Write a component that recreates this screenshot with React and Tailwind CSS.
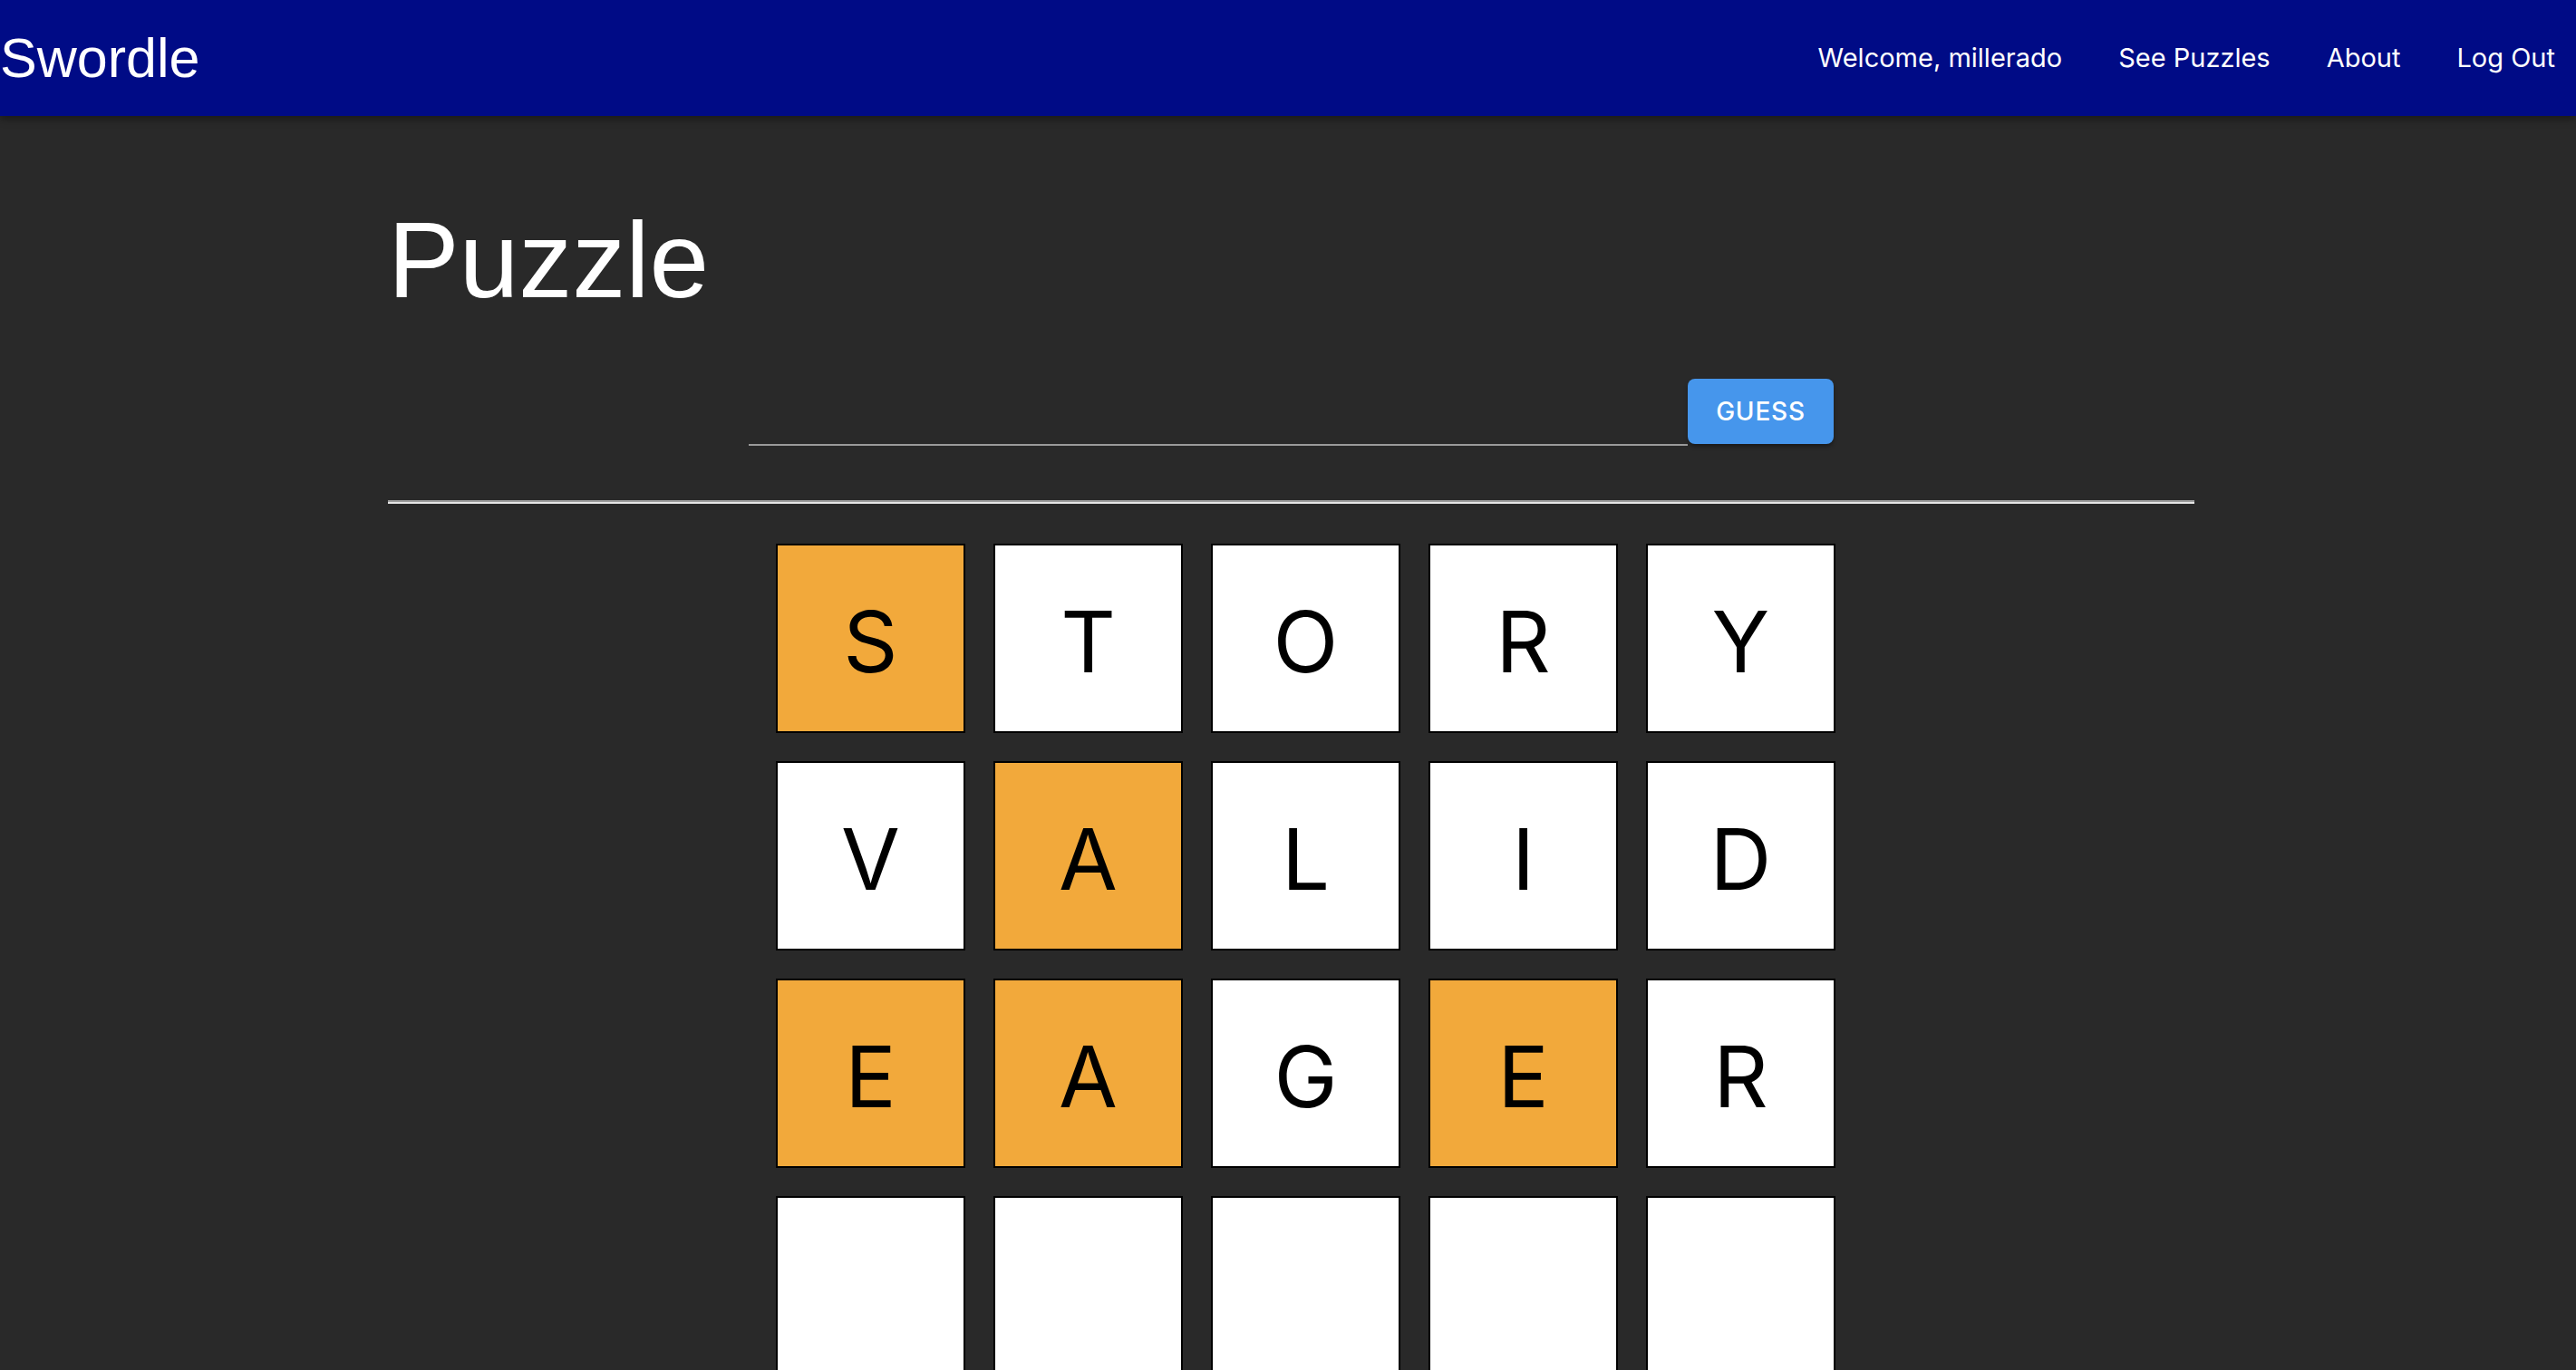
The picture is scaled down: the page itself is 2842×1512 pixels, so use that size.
import { useState } from "react";

const GUESSES = ["STORY", "VALID", "EAGER"];
// letters that are in the word but in the wrong spot
const PRESENT = [
  [true, false, false, false, false],
  [false, true, false, false, false],
  [true, true, false, true, false],
];

function Tile({ letter, present }) {
  return (
    <div
      className={`w-[209px] h-[209px] pt-[7px] border-2 border-black flex items-center justify-center text-[94px] text-black font-['Inter',sans-serif] leading-none ${
        present ? "bg-[#f2a93b]" : "bg-white"
      }`}
    >
      {letter}
    </div>
  );
}

export default function App() {
  const [guess, setGuess] = useState("");
  const rows = [...GUESSES, "", "", ""];

  return (
    <div className="h-screen overflow-hidden bg-[#292929]">
      {/* top bar */}
      <header className="h-[128px] bg-[#000b86] flex items-center justify-between shadow-[0_4px_8px_rgba(0,0,0,0.35)] relative z-10">
        <h1 className="text-white text-[61px] font-['Liberation_Sans',Arial,sans-serif] leading-none">
          Swordle
        </h1>
        <nav className="flex items-center gap-[62px] pr-[23px] text-white text-[29px] font-['Inter',sans-serif]">
          <a>Welcome, millerado</a>
          <a>See Puzzles</a>
          <a>About</a>
          <a>Log Out</a>
        </nav>
      </header>

      <main className="w-[1993px] ml-[428px]">
        <h2 className="mt-[100px] text-white text-[118px] leading-none font-['Liberation_Sans',Arial,sans-serif]">
          Puzzle
        </h2>

        <div className="mt-[72px] flex justify-center items-start">
          <input
            value={guess}
            onChange={(e) => setGuess(e.target.value)}
            className="w-[1036px] h-[74px] bg-transparent border-b-2 border-[#9a9a9a] outline-none text-white text-[32px] font-['Inter',sans-serif]"
          />
          <button className="w-[161px] h-[72px] rounded-[8px] bg-[#4696ec] text-white text-[28px] font-medium tracking-[0.8px] font-['Inter',sans-serif] shadow-[0_3px_4px_rgba(0,0,0,0.35)]">
            GUESS
          </button>
        </div>

        <hr className="mt-[60px] border-0 border-t-2 border-b-2 border-t-[#9c9c9c] border-b-[#e6e6e6]" />

        <div className="mt-[44px] ml-[428px] flex flex-col gap-[31px]">
          {rows.map((word, r) => (
            <div key={r} className="flex gap-[31px]">
              {[0, 1, 2, 3, 4].map((c) => (
                <Tile key={c} letter={word[c] || ""} present={PRESENT[r]?.[c]} />
              ))}
            </div>
          ))}
        </div>
      </main>
    </div>
  );
}
